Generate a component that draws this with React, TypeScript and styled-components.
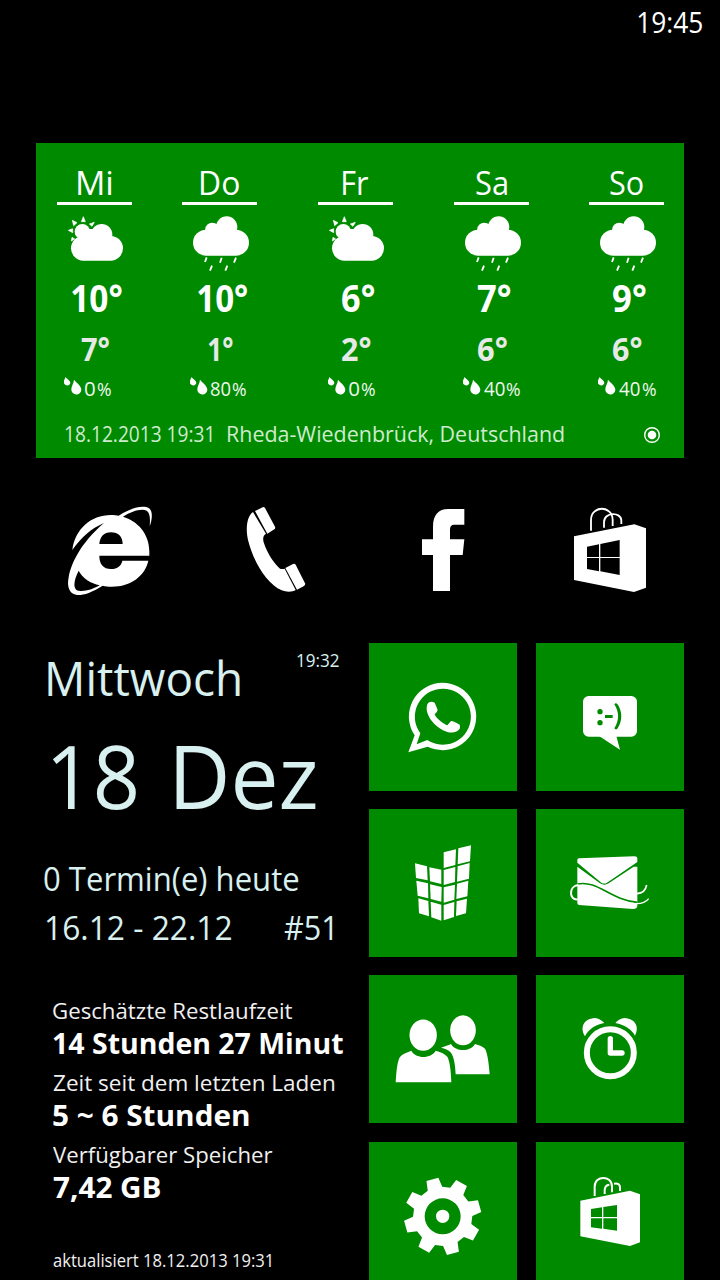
import React, { useLayoutEffect, useRef, useState } from 'react';
import styled, { createGlobalStyle } from 'styled-components';

const ACCENT = '#008a00';
const ICE = '#d8f0ef';
const FONT = '"Open Sans", "Noto Sans", sans-serif';

const GlobalStyle = createGlobalStyle`
  * { box-sizing: border-box; }
  body { margin: 0; background: #000; font-family: ${FONT}; }
`;

/* ---------- text ---------- */

const TextBox = styled.div<{ $size: number; $width: number; $color: string; $bold: boolean }>`
  flex: none;
  width: ${(p) => p.$width}px;
  height: ${(p) => p.$size}px;
  font-size: ${(p) => p.$size}px;
  line-height: ${(p) => p.$size}px;
  font-weight: ${(p) => (p.$bold ? 700 : 400)};
  color: ${(p) => p.$color};
  white-space: pre;
`;

const TextInk = styled.span`
  display: inline-block;
  vertical-align: top;
  transform-origin: 0 0;
`;

interface LabelProps {
  children: string;
  size: number;
  width: number;
  color?: string;
  bold?: boolean;
}

/* A single line whose drawn glyphs span exactly the given width. */
function Label({ children, size, width, color = '#fff', bold = false }: LabelProps) {
  const [transform, setTransform] = useState('none');
  const canvas = useRef<HTMLCanvasElement | null>(null);
  useLayoutEffect(() => {
    canvas.current = canvas.current ?? document.createElement('canvas');
    const ctx = canvas.current.getContext('2d');
    if (!ctx) return;
    ctx.font = `${bold ? 700 : 400} ${size}px ${FONT}`;
    const m = ctx.measureText(children);
    const scale = width / (m.actualBoundingBoxLeft + m.actualBoundingBoxRight);
    setTransform(`translateX(${m.actualBoundingBoxLeft * scale}px) scaleX(${scale})`);
  }, [children, size, width, bold]);
  return (
    <TextBox $size={size} $width={width} $color={color} $bold={bold}>
      <TextInk style={{ transform }}>{children}</TextInk>
    </TextBox>
  );
}

/* ---------- layout ---------- */

const Screen = styled.main`
  width: 720px;
  height: 1280px;
  overflow: hidden;
  background: #000;
  display: flex;
  flex-direction: column;
`;

const StatusBar = styled.header`
  height: 143px;
  flex: none;
  padding: 7px 17.5px 0 0;
  display: flex;
  justify-content: flex-end;
`;

const WeatherTile = styled.section`
  flex: none;
  width: 648px;
  height: 315px;
  margin-left: 36px;
  background: ${ACCENT};
  padding: 22.5px 0 0 21px;
`;

const Forecast = styled.div`
  display: grid;
  grid-template-columns: 125.4px 135.8px 136px 135.1px 75px;
  height: 257px;
`;

const Day = styled.div`
  width: 75px;
  display: flex;
  flex-direction: column;
  align-items: center;
`;

const DayRule = styled.div`
  width: 75px;
  height: 3px;
  margin: 3.5px 0 8px;
  background: #fff;
`;

const DayIcon = styled.svg`
  width: 60px;
  height: 60px;
  flex: none;
  fill: #fff;
  margin-left: 4px;
`;

const High = styled.div`
  margin-top: 6px;
  padding-left: 5px;
`;

const Low = styled.div`
  margin-top: 15.5px;
  padding-left: 1px;
`;

const Rain = styled.div<{ $indent: number }>`
  align-self: flex-start;
  margin: 11.5px 0 0 ${(p) => p.$indent}px;
  display: flex;
  align-items: flex-start;
`;

const Drops = styled.svg`
  width: 18px;
  height: 20px;
  margin-right: 3px;
  fill: #fff;
`;

const RainValue = styled.div`
  margin: 2px 1.7px 0 0;
`;

const RainUnit = styled.div`
  margin-top: 4px;
`;

const WeatherFooter = styled.footer`
  display: flex;
  padding-left: 7.5px;
`;

const Place = styled.div`
  margin-left: 16.5px;
`;

const Target = styled.svg`
  width: 18px;
  height: 18px;
  margin: 3px 0 0 79.5px;
`;

const QuickLaunch = styled.nav`
  flex: none;
  height: 120px;
  margin: 32px 36px 33px;
  display: grid;
  grid-template-columns: 167px 166px 167px 148px;
`;

const QuickIcon = styled.svg`
  width: 148px;
  height: 120px;
  fill: #fff;
`;

const Start = styled.div`
  display: flex;
  flex: none;
  margin: 0 36px;
  gap: 19px;
`;

const LeftColumn = styled.div`
  width: 314px;
`;

const TileGrid = styled.div`
  display: grid;
  grid-template-columns: 148px 148px;
  grid-template-rows: 166px 166px 167px 148px;
  column-gap: 19px;
`;

const Tile = styled.div`
  width: 148px;
  height: 148px;
  background: ${ACCENT};
`;

const TileIcon = styled.svg`
  display: block;
  width: 148px;
  height: 148px;
  fill: #fff;
`;

const Calendar = styled.section`
  height: 332px;
  padding: 8px 11.3px 0 8.3px;
`;

const CalendarHead = styled.div`
  display: flex;
  justify-content: space-between;
  padding-left: 3.7px;
`;

const Weekday = styled.div`
  margin-top: 3.5px;
`;

const BigDate = styled.div`
  display: flex;
  gap: 39.5px;
  margin: 29px 0 44px 8px;
`;

const WeekRow = styled.div`
  display: flex;
  gap: 53px;
  margin: 17px 0 0 2.2px;
`;

const Battery = styled.section`
  padding: 24.8px 0 0 17.3px;
  display: flex;
  flex-direction: column;
  gap: 15.2px;
`;

const Stat = styled.div`
  display: flex;
  flex-direction: column;
  gap: 5.6px;
`;

const Updated = styled.div`
  margin-top: 34.8px;
`;

/* ---------- weather ---------- */

const SunCloud = () => (
  <DayIcon viewBox="93 210 180 180">
    <path
      d="M142 221l6 15h-12zM109 232l14 7-10 9zM175 238l-7 12-8-7zM97 262l13-5v12zM106 294l2-11 8 5z"
      stroke="#fff"
      strokeWidth="2"
    />
    <circle cx="139" cy="266" r="23" />
    <circle cx="197" cy="275" r="32" />
    <rect x="105" y="279" width="156" height="74" rx="37" />
    <path d="M125 285L160 258H180V300H125Z" />
  </DayIcon>
);

const RainCloud = () => (
  <DayIcon viewBox="467 210 180 180">
    <circle cx="571" cy="252" r="32" />
    <circle cx="528" cy="261" r="22" />
    <rect x="470" y="260" width="168" height="78" rx="39" />
    <g stroke="#fff" strokeWidth="5.5">
      <path d="M511 343l-5 14M556 344l-5 15M599 344l-6 15M527 368l-6 15M573 368l-6 15" />
    </g>
  </DayIcon>
);

const DropIcon = () => (
  <Drops viewBox="84 699 54 60">
    <path d="M88 702C92 707 103 713 103 720C101 731 84 729 83 717C83 711 87 709 88 702Z" />
    <path d="M114 710C120 718 136 728 136 740C135 759 106 759 106 739C106 729 113 722 114 710Z" />
  </Drops>
);

interface DayData {
  name: string; nameW: number; rain: boolean;
  high: string; highW: number; low: string; lowW: number;
  pct: string; pctW: number; indent: number;
}

const DAYS: DayData[] = [
  { name: 'Mi', nameW: 33.5, rain: false, high: '10°', highW: 50, low: '7°', lowW: 28, pct: '0', pctW: 10, indent: 7 },
  { name: 'Do', nameW: 38.5, rain: true, high: '10°', highW: 49.5, low: '1°', lowW: 24.5, pct: '80', pctW: 19.5, indent: 7.5 },
  { name: 'Fr', nameW: 25, rain: false, high: '6°', highW: 32.5, low: '2°', lowW: 28.5, pct: '0', pctW: 10, indent: 10 },
  { name: 'Sa', nameW: 31, rain: true, high: '7°', highW: 32.8, low: '6°', lowW: 28.8, pct: '40', pctW: 20.7, indent: 8.4 },
  { name: 'So', nameW: 33.5, rain: true, high: '9°', highW: 33, low: '6°', lowW: 28.5, pct: '40', pctW: 20.7, indent: 9 },
];

/* ---------- gear teeth and building panes ---------- */

const gearPath = () => {
  const pts: string[] = [];
  for (let k = 0; k < 8; k++) {
    const a = ((-15.5 + 45 * k) * Math.PI) / 180;
    [[-22.5, -86], [-18.5, -115], [18.5, -115], [22.5, -86]].forEach(([x, y]) => {
      const px = 233 + x * Math.cos(a) - y * Math.sin(a);
      const py = 244 + x * Math.sin(a) + y * Math.cos(a);
      pts.push(`${px.toFixed(1)} ${py.toFixed(1)}`);
    });
  }
  return `M${pts.join('L')}Z M287 244A54 54 0 1 0 179 244A54 54 0 1 0 287 244Z M253 244A20 20 0 1 0 213 244A20 20 0 1 0 253 244Z`;
};

const PANES = [
  '150,175 186,184 188,226 153,219', '193,187 229,194 229,237 195,229',
  '154,227 189,235 190,280 158,272', '195,238 230,246 229,290 197,282',
  '160,280 190,288 192,334 162,325', '197,290 229,299 229,347 199,337',
  '236,142 273,133 271,180 236,189', '280,130 318,121 315,169 278,178',
  '236,195 271,186 270,231 236,240', '278,184 314,174 312,221 276,230',
  '236,247 270,239 268,284 236,293', '276,236 310,227 307,274 274,282',
  '236,300 268,291 267,336 236,346', '275,289 306,281 303,325 273,333',
];

export default function App() {
  return (
    <>
      <GlobalStyle />
      <Screen>
        <StatusBar>
          <Label size={29.5} width={64.6}>19:45</Label>
        </StatusBar>

        <WeatherTile>
          <Forecast>
            {DAYS.map((d) => (
              <Day key={d.name}>
                <Label size={33} width={d.nameW}>{d.name}</Label>
                <DayRule />
                {d.rain ? <RainCloud /> : <SunCloud />}
                <High><Label size={37} width={d.highW} bold>{d.high}</Label></High>
                <Low><Label size={33} width={d.lowW} bold color="#e6e9e6">{d.low}</Label></Low>
                <Rain $indent={d.indent}>
                  <DropIcon />
                  <RainValue><Label size={20.5} width={d.pctW} color="#f0f8f0">{d.pct}</Label></RainValue>
                  <RainUnit><Label size={18} width={13.7} color="#f0f8f0">%</Label></RainUnit>
                </Rain>
              </Day>
            ))}
          </Forecast>
          <WeatherFooter>
            <Label size={21.5} width={146.5} color="#cfeacf">18.12.2013 19:31</Label>
            <Place><Label size={21.5} width={336} color="#cfeacf">Rheda-Wiedenbrück, Deutschland</Label></Place>
            <Target viewBox="0 0 18 18">
              <circle cx="9" cy="9" r="7.3" fill="none" stroke="#fff" strokeWidth="1.4" />
              <circle cx="9" cy="9" r="4.3" fill="#fff" />
            </Target>
          </WeatherFooter>
        </WeatherTile>

        <QuickLaunch>
          <QuickIcon viewBox="-42 0 444 360">
            <path
              fillRule="evenodd"
              d="M67 180C75 118 122 75 183 75C192 75 200 76 206 77C245 52 280 45 297 55C309 63 307 88 299 109C301 85 300 68 290 62C275 54 245 63 219 80C262 93 298 130 298 185L298 197L148 197C148 222 160 237 183 237C203 237 214 227 217 212L295 212C285 257 243 290 185 290C175 290 165 289 158 287C125 308 100 316 82 315C58 312 50 290 56 262C62 225 90 160 162 99C125 115 95 140 67 180ZM86 242C74 265 68 290 79 300C95 308 125 300 149 286C122 280 98 265 86 242ZM148 162C150 140 162 127 183 127C205 127 218 140 218 162Z"
            />
          </QuickIcon>
          <QuickIcon viewBox="459 0 444 360">
            <path d="M609 66L648 131C638 137 638 148 642 160C652 190 670 218 690 236C697 238 701 237 704 236L737 300C728 306 710 307 695 301C650 280 610 215 594 150C587 120 589 80 609 66Z" />
            <path d="M615 63L638 52Q642 50 645 54L675 110Q677 115 673 118L652 131Z" />
            <path d="M706 234L729 222Q734 220 737 224L765 280Q767 285 762 288L741 299Z" />
          </QuickIcon>
          <QuickIcon viewBox="-93 0 444 360">
            <path d="M193 57V104H162Q150 104 150 118V148H193L188 195H150V303H99V195H66V148H99V110C99 75 115 57 145 57Z" />
          </QuickIcon>
          <QuickIcon viewBox="408 0 444 360">
            <path
              fillRule="evenodd"
              d="M522 139L703 103L738 115V293L702 306L522 270ZM561 170V201H597V163ZM601 162V201H659V150ZM561 204V237L597 244V204ZM601 204V244L659 255V204Z"
            />
            <g fill="none" stroke="#fff" strokeWidth="5.5">
              <path d="M573 122V90C573 45 638 45 638 90V108" />
              <path d="M612 113V97C612 65 664 65 664 92V102" />
            </g>
          </QuickIcon>
        </QuickLaunch>

        <Start>
          <LeftColumn>
            <Calendar>
              <CalendarHead>
                <Weekday><Label size={47} width={191.5} color={ICE}>Mittwoch</Label></Weekday>
                <Label size={18.7} width={42} color={ICE}>19:32</Label>
              </CalendarHead>
              <BigDate>
                <Label size={88} width={84} color={ICE}>18</Label>
                <Label size={88} width={139.5} color={ICE}>Dez</Label>
              </BigDate>
              <Label size={32} width={254.7} color={ICE}>0 Termin(e) heute</Label>
              <WeekRow>
                <Label size={32.5} width={185} color={ICE}>16.12 - 22.12</Label>
                <Label size={32.5} width={48.5} color={ICE}>#51</Label>
              </WeekRow>
            </Calendar>
            <Battery>
              <Stat>
                <Label size={22.5} width={239.5} color="#f0f0f0">Geschätzte Restlaufzeit</Label>
                <Label size={29} width={290} bold>14 Stunden 27 Minut</Label>
              </Stat>
              <Stat>
                <Label size={22.5} width={281} color="#f0f0f0">Zeit seit dem letzten Laden</Label>
                <Label size={29} width={195.5} bold>5 ~ 6 Stunden</Label>
              </Stat>
              <Stat>
                <Label size={22.5} width={219.3} color="#f0f0f0">Verfügbarer Speicher</Label>
                <Label size={29} width={107} bold>7,42 GB</Label>
              </Stat>
              <Updated>
                <Label size={18.7} width={218} color="#f0f0f0">aktualisiert 18.12.2013 19:31</Label>
              </Updated>
            </Battery>
          </LeftColumn>

          <TileGrid>
            <Tile>
              <TileIcon viewBox="12 9 444 444">
                <path fillRule="evenodd" d="M130 337L149 286A101 101 0 1 1 188 320ZM155 313L166 280A84 84 0 1 1 187 300Z" />
                <path d="M190 188Q200 183 209 188L218 209Q218 214 209 223C214 236 232 250 247 256L258 243Q262 241 284 254Q286 260 284 266C278 276 262 281 245 275C215 264 193 240 186 215C184 203 185 193 190 188Z" />
              </TileIcon>
            </Tile>
            <Tile>
              <TileIcon viewBox="513 9 444 444">
                <rect x="654" y="168" width="162" height="122" rx="17" />
                <path d="M702 288L765 329L754 288Z" />
                <g fill={ACCENT}>
                  <circle cx="705" cy="215" r="8" />
                  <circle cx="705" cy="248" r="8" />
                  <rect x="720" y="225" width="23" height="9" />
                  <path d="M748 193Q752 187 757 192C773 214 773 244 757 266Q752 271 748 265C763 240 763 218 748 193Z" />
                </g>
              </TileIcon>
            </Tile>
            <Tile>
              <TileIcon viewBox="12 12 444 444">
                {PANES.map((p) => <polygon key={p} points={p} />)}
              </TileIcon>
            </Tile>
            <Tile>
              <TileIcon viewBox="513 12 444 444">
                <path d="M637 165Q637 161 642 160L808 154Q817 154 817 161V171L726 233Q718 238 709 233L637 173Z" />
                <path d="M637 185L705 235Q718 243 731 235L806 185H817V303Q816 312 804 312L642 300Q637 299 637 295Z" />
                <g fill="none" strokeWidth="5">
                  <path d="M637 237C700 225 735 285 817 292" stroke={ACCENT} />
                  <path d="M638 283C612 287 610 243 640 240" stroke="#fff" strokeWidth="6" />
                  <path d="M816 266C832 265 842 256 845 240" stroke="#fff" />
                  <path d="M800 295C825 298 843 292 851 281" stroke="#fff" strokeWidth="4" />
                </g>
              </TileIcon>
            </Tile>
            <Tile>
              <TileIcon viewBox="12 15 444 444">
                <ellipse cx="174.500" cy="195.500" rx="41" ry="47" />
                <path d="M92 337C94 310 95 285 102 266C108 252 125 248 139 242C152 267 198 267 212 242C225 246 240 250 248 262C256 280 258 310 259 337Z" />
                <ellipse cx="294" cy="181" rx="38.500" ry="45" />
                <path d="M228 233C240 229 250 226 258 222C272 246 316 246 330 222C342 226 355 229 361 238C369 255 372 290 374 313H272C271 290 268 262 258 248C250 239 240 236 228 233Z" />
              </TileIcon>
            </Tile>
            <Tile>
              <TileIcon viewBox="513 15 444 444">
                <circle cx="736" cy="248" r="70.500" fill="none" stroke="#fff" strokeWidth="18" />
                <path d="M736 206V249H771" fill="none" stroke="#fff" strokeWidth="16" strokeLinecap="round" strokeLinejoin="round" />
                <path d="M660 199C645 175 653 146 690 144Q705 145 718 159C692 163 670 178 660 199Z" />
                <path d="M810 197C822 175 816 147 778 144Q763 146 751 159C777 163 800 178 810 197Z" />
              </TileIcon>
            </Tile>
            <Tile>
              <TileIcon viewBox="12 21 444 444">
                <path fillRule="evenodd" d={gearPath()} />
              </TileIcon>
            </Tile>
            <Tile>
              <TileIcon viewBox="513 21 444 444">
                <path
                  fillRule="evenodd"
                  d="M646 197L795 167L825 178V322L795 333L646 304ZM678 222V246H711V217ZM715 216V246H756V210ZM678 250V277L711 281V250ZM715 250V281L756 287V250Z"
                />
                <g fill="none" stroke="#fff" strokeWidth="6">
                  <path d="M689 183V155C689 120 741 120 741 155V172" />
                  <path d="M719 177V165Q720 150 733 149" />
                  <path d="M747 146Q765 143 765 157V168" />
                </g>
              </TileIcon>
            </Tile>
          </TileGrid>
        </Start>
      </Screen>
    </>
  );
}
